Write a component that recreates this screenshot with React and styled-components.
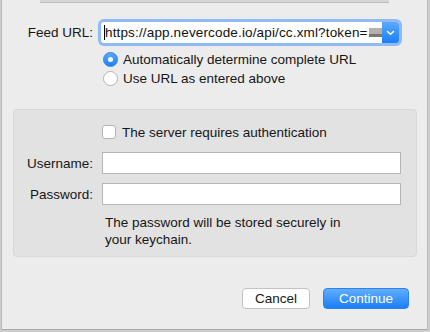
import React, { useState } from 'react';
import styled, { createGlobalStyle } from 'styled-components';

const GlobalStyle = createGlobalStyle`
  html, body {
    margin: 0;
    padding: 0;
    background: #cdcdcd;
  }
  * {
    box-sizing: border-box;
  }
`;

const Root = styled.div`
  width: 430px;
  height: 332px;
  padding-left: 1px;
  background: #cdcdcd;
  font-family: 'Liberation Sans', Arial, sans-serif;
  font-size: 13.5px;
  color: #161616;
`;

const Sheet = styled.div`
  width: 427px;
  height: 330px;
  display: flex;
  flex-direction: column;
  background: #ececec;
  border-left: 1px solid #b9b9b9;
  border-right: 1px solid #b9b9b9;
  border-bottom: 1px solid #a9a9a9;
`;

const TopStrip = styled.div`
  height: 3px;
  margin: 0 38px 0 38px;
  background: #d6d6d6;
  border-bottom: 1px solid #bdbdbd;
`;

const FeedRow = styled.div`
  display: grid;
  grid-template-columns: 91px 298px;
  column-gap: 8px;
  align-items: center;
  margin-top: 19px;
  height: 21px;
`;

const Label = styled.label`
  text-align: right;
  white-space: nowrap;
`;

const Combo = styled.div`
  display: flex;
  height: 21px;
  border-radius: 3px;
  box-shadow: 0 0 0 3px #8fbaf3;
  background: #fff;
  overflow: hidden;
`;

const ComboText = styled.div`
  flex: 1;
  display: flex;
  align-items: center;
  padding-left: 3px;
  white-space: nowrap;
  overflow: hidden;
  letter-spacing: 0.15px;
  color: #111;
`;

const Caret = styled.span`
  display: inline-block;
  flex-shrink: 0;
  width: 1px;
  height: 15px;
  background: #000;
`;

const Blurred = styled.span`
  display: inline-block;
  flex-shrink: 0;
  width: 13px;
  height: 9px;
  margin-left: 1px;
  background: linear-gradient(#b8b0a8 0 70%, #7b7670 70% 100%);
`;

const DropButton = styled.div`
  width: 17px;
  flex-shrink: 0;
  display: flex;
  align-items: center;
  justify-content: center;
  background: linear-gradient(#5ba9fc, #1b7ff6);
`;

const RadioGroup = styled.div`
  display: flex;
  flex-direction: column;
  margin-top: 7px;
  padding-left: 101px;
`;

const OptionRow = styled.label`
  display: flex;
  align-items: center;
  height: 19px;
  gap: 5px;
  cursor: default;
`;

const RadioCircle = styled.span`
  width: 15px;
  height: 15px;
  border-radius: 50%;
  display: flex;
  align-items: center;
  justify-content: center;
  background: ${p => (p.$on ? 'linear-gradient(#5aa8fc, #1e80f6)' : '#fff')};
  border: 1px solid ${p => (p.$on ? '#2a84ec' : '#b4b4b4')};
  &::after {
    content: '';
    display: ${p => (p.$on ? 'block' : 'none')};
    width: 5px;
    height: 5px;
    border-radius: 50%;
    background: #fff;
  }
`;

const AuthBox = styled.div`
  margin: 21px 0 0 11px;
  width: 404px;
  padding: 12px 0 8px 0;
  background: #e2e2e2;
  border: 1px solid #d8d8d8;
  border-radius: 4px;
  display: flex;
  flex-direction: column;
`;

const CheckRow = styled.label`
  display: flex;
  align-items: center;
  gap: 6px;
  height: 20px;
  padding-left: 88px;
`;

const CheckSquare = styled.span`
  width: 14px;
  height: 14px;
  border-radius: 3px;
  background: #fff;
  border: 1px solid #b4b4b4;
`;

const FieldGrid = styled.div`
  display: grid;
  grid-template-columns: 79px 299px;
  column-gap: 9px;
  row-gap: 9px;
  align-items: center;
  margin-top: 10px;
`;

const TextInput = styled.input`
  height: 22px;
  width: 100%;
  border: 1px solid #b5b5b5;
  background: #fff;
  font: inherit;
  outline: none;
  padding: 0 3px;
`;

const Help = styled.p`
  margin: 9px 0 0 91px;
  width: 250px;
  line-height: 17px;
  color: #161616;
`;

const ButtonBar = styled.div`
  display: flex;
  justify-content: flex-end;
  gap: 13px;
  margin-top: 31px;
  padding-right: 18px;
`;

const Button = styled.button`
  height: 21px;
  width: ${p => p.$w}px;
  font-family: inherit;
  font-size: 13.5px;
  border-radius: 4px;
  padding: 0;
  cursor: default;
  color: ${p => (p.$primary ? '#fff' : '#161616')};
  background: ${p => (p.$primary ? 'linear-gradient(#62adfc, #1a7ef6)' : '#fff')};
  border: 1px solid ${p => (p.$primary ? '#2b83ec' : '#c2c2c2')};
`;

function Chevron() {
  return (
    <svg width="9" height="6" viewBox="0 0 9 6">
      <path d="M1.5 1.5 L4.5 4.3 L7.5 1.5" fill="none" stroke="#fff" strokeWidth="1.5" strokeLinecap="round" strokeLinejoin="round" />
    </svg>
  );
}

export default function App() {
  const [mode, setMode] = useState('auto');
  const [auth, setAuth] = useState(false);

  return (
    <Root>
      <GlobalStyle />
      <Sheet>
        <TopStrip />
        <FeedRow>
          <Label>Feed URL:</Label>
          <Combo>
            <ComboText>
              <Caret />https://app.nevercode.io/api/cc.xml?token=<Blurred />
            </ComboText>
            <DropButton><Chevron /></DropButton>
          </Combo>
        </FeedRow>
        <RadioGroup>
          <OptionRow onClick={() => setMode('auto')}>
            <RadioCircle $on={mode === 'auto'} />
            Automatically determine complete URL
          </OptionRow>
          <OptionRow onClick={() => setMode('asis')}>
            <RadioCircle $on={mode === 'asis'} />
            Use URL as entered above
          </OptionRow>
        </RadioGroup>
        <AuthBox>
          <CheckRow onClick={() => setAuth(!auth)}>
            <CheckSquare />
            The server requires authentication
          </CheckRow>
          <FieldGrid>
            <Label>Username:</Label>
            <TextInput type="text" />
            <Label>Password:</Label>
            <TextInput type="password" />
          </FieldGrid>
          <Help>The password will be stored securely in your keychain.</Help>
        </AuthBox>
        <ButtonBar>
          <Button $w={68}>Cancel</Button>
          <Button $w={86} $primary>Continue</Button>
        </ButtonBar>
      </Sheet>
    </Root>
  );
}
